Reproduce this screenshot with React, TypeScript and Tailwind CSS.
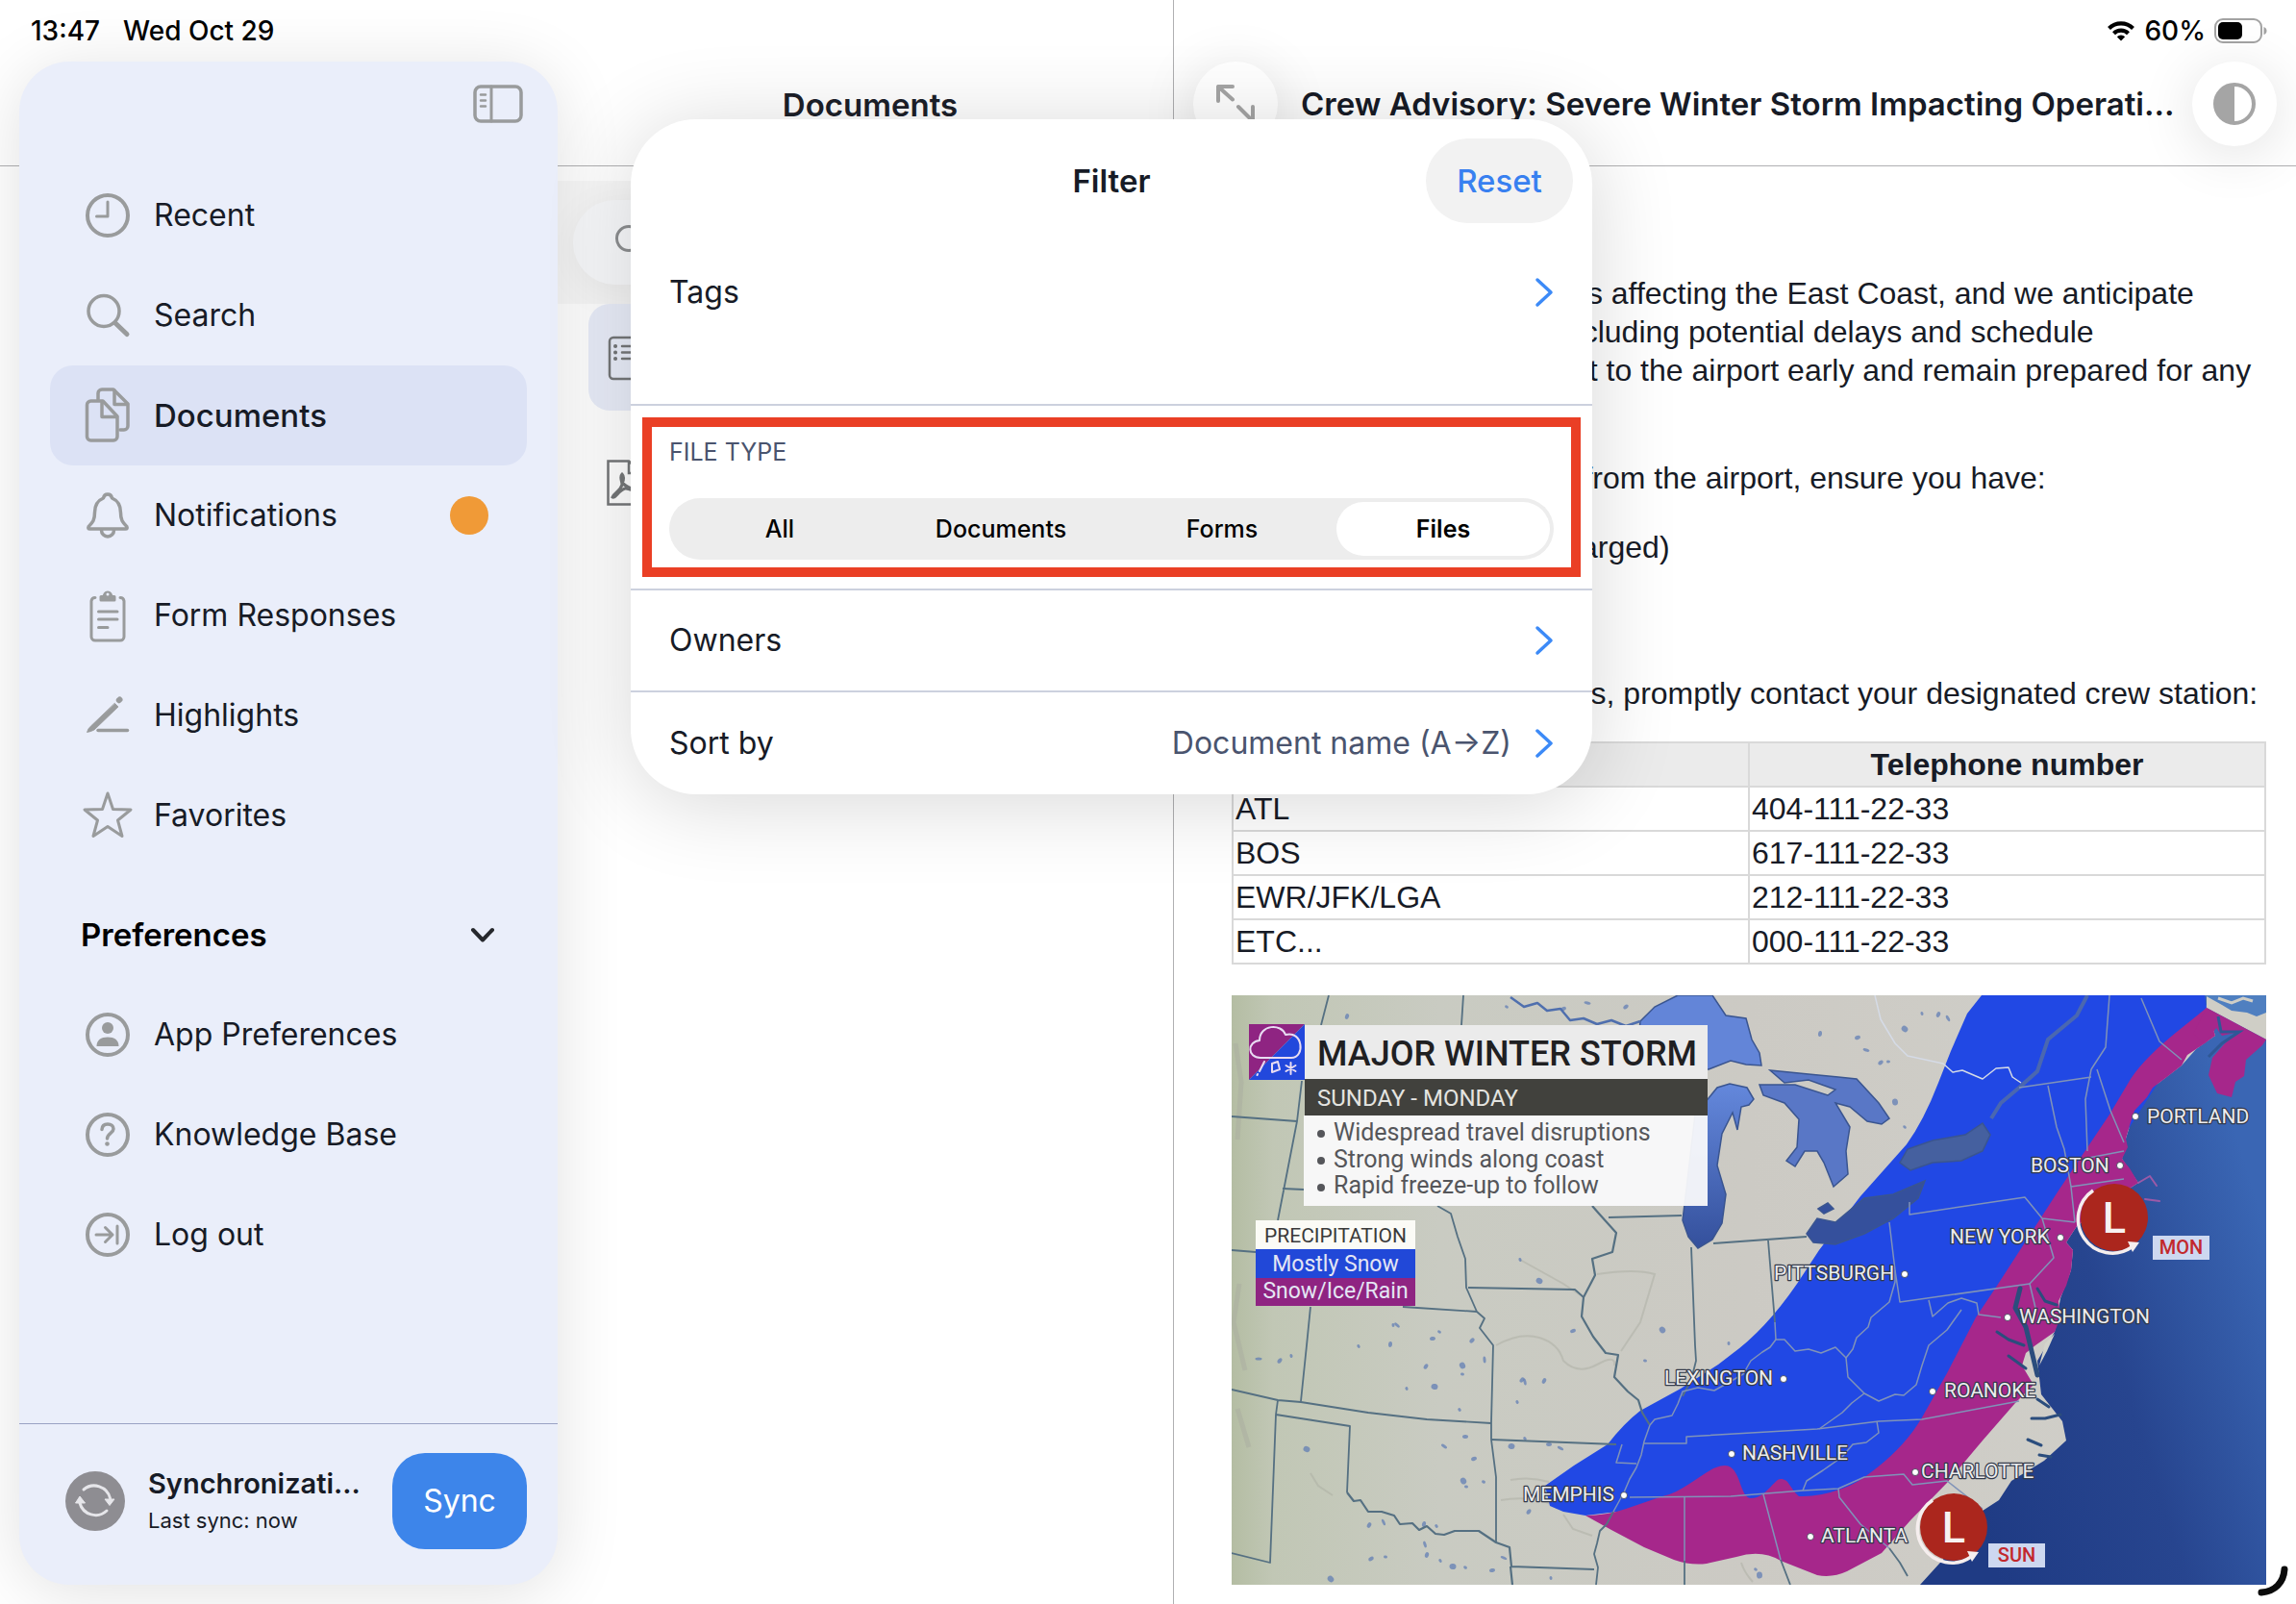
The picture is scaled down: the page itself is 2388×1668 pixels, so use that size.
import React, { useState } from 'react';

type IconProps = { children: React.ReactNode };

// Shared frame for the sidebar icons, the drawing itself sits on a 48x48 field
function NavIcon({ children }: IconProps) {
  return (
    <svg
      className="h-15 w-12 shrink-0 overflow-visible text-[#999b9c]"
      viewBox="0 -6 48 60"
      fill="none"
      stroke="currentColor"
      strokeWidth="4"
      strokeLinecap="round"
      strokeLinejoin="round"
      aria-hidden="true"
    >
      {children}
    </svg>
  );
}

const mainItems = [
  {
    label: 'Recent',
    icon: (
      <>
        <circle cx="24" cy="24" r="21" />
        <path d="M24 10V25H12.500" strokeWidth="3" />
      </>
    ),
  },
  {
    label: 'Search',
    icon: (
      <>
        <circle cx="20" cy="19.500" r="16" strokeWidth="3.500" />
        <path d="M32 32L44 43.500" strokeWidth="5" />
      </>
    ),
  },
  {
    label: 'Documents',
    icon: (
      <g strokeWidth="3.500">
        <path d="M6.500 9H19L34 25V46a4 4 0 0 1-4 4H6.500a4 4 0 0 1-4-4V13a4 4 0 0 1 4-4Z" />
        <path d="M18 9.500V25.500H33.500" />
        <path d="M14 7.500V1a4 4 0 0 1 4-4H30L45 12V35a4 4 0 0 1-4 4H37" />
        <path d="M31 -2V12.500H44.500" />
      </g>
    ),
  },
  {
    label: 'Notifications',
    badge: true,
    icon: (
      <g strokeWidth="3.500">
        <path d="M24 2C21.500 2 20 3.500 19.500 6C13.500 8.500 10.500 14 10.500 21C10.500 29 8.500 31 4.200 35.500Q3 38 5.500 38H42.500Q45 38 43.800 35.500C39.500 31 37.500 29 37.500 21C37.500 14 34.500 8.500 28.500 6C28 3.500 26.500 2 24 2Z" />
        <path d="M17.500 39.500a6.500 6.500 0 0 0 13 0" />
      </g>
    ),
  },
  {
    label: 'Form Responses',
    icon: (
      <g strokeWidth="3">
        <path d="M11 5.500a4 4 0 0 0-4 3.500V46a4 4 0 0 0 4 4H37a4 4 0 0 0 4-4V9a4 4 0 0 0-4-3.500" />
        <path d="M17 8V4.500h3.500a3.600 3.600 0 1 1 7 0H31V8Z" fill="currentColor" />
        <circle cx="24" cy="2" r="1.500" fill="#eaeefa" stroke="none" />
        <path d="M14.500 20H34M14.500 28H34M14.500 36.500H24" />
      </g>
    ),
  },
  {
    label: 'Highlights',
    icon: (
      <g>
        <path d="M31.500 11.500L35 15L10 39Q6 41 2.500 41.500Q3.500 37.500 6 35.500Z" fill="currentColor" strokeWidth="0.800" />
        <path d="M35.800 8.200L36.500 7.500" strokeWidth="6" />
        <path d="M14 39.500H44.500" strokeWidth="3.500" />
      </g>
    ),
  },
  {
    label: 'Favorites',
    icon: (
      <path
        d="M24 1L29.500 17.500L48 18L34.500 29L39 45.500L24 35.500L9 45.500L13.500 29L0 18L18.500 17.500Z"
        strokeWidth="3"
      />
    ),
  },
];

const preferenceItems = [
  {
    label: 'App Preferences',
    icon: (
      <>
        <circle cx="24" cy="24" r="21" />
        <circle cx="24" cy="17" r="6" fill="currentColor" stroke="none" />
        <path d="M12.500 36C12.500 29.500 17 26.500 24 26.500S35.500 29.500 35.500 36Z" fill="currentColor" stroke="none" />
      </>
    ),
  },
  {
    label: 'Knowledge Base',
    icon: (
      <>
        <circle cx="24" cy="24" r="21" />
        <path d="M18 18.500C18.200 14.800 20.600 13 24 13C27.600 13 30 15 30 18C30 22.300 23.500 22.500 23.500 28" strokeWidth="3.500" />
        <circle cx="23.500" cy="33.500" r="2.300" fill="currentColor" stroke="none" />
      </>
    ),
  },
  {
    label: 'Log out',
    icon: (
      <>
        <circle cx="24" cy="24" r="21" />
        <path d="M12 24H29M21.500 16.500L29 24L21.500 31.500M34 15V33" strokeWidth="3" />
      </>
    ),
  },
];

function Sidebar() {
  const [active, setActive] = useState('Documents');

  const renderItem = (item: { label: string; icon: React.ReactNode; badge?: boolean }) => (
    <li key={item.label}>
      <button
        onClick={() => setActive(item.label)}
        className={`flex h-[104px] w-full items-center gap-6 rounded-[24px] pl-9 pr-10 text-left text-[#171b26] ${
          active === item.label ? 'bg-[#dce2f5] text-[33px] font-medium' : ''
        }`}
      >
        <NavIcon>{item.icon}</NavIcon>
        <span className="flex-1">{item.label}</span>
        {item.badge && <span className="h-10 w-10 rounded-full bg-[#f09a37]" />}
      </button>
    </li>
  );

  return (
    <aside className="z-10 col-start-1 row-span-2 row-start-1 mb-5 ml-5 mt-16 flex flex-col rounded-[52px] bg-[#eaeefa] shadow-[0_8px_70px_rgba(0,0,0,0.12)]">
      <div className="flex h-[108px] items-start justify-end pr-9 pt-6">
        <button aria-label="Toggle sidebar">
          <svg className="h-10 w-[52px]" viewBox="0 0 52 40" fill="none" stroke="#999b9c" strokeWidth="3.500" strokeLinecap="round">
            <rect x="2" y="2" width="48" height="36" rx="6" />
            <path d="M19 2V38" strokeWidth="3" />
            <path d="M8 10.500H13M8 16.500H13M8 22.500H13" strokeWidth="2.500" />
          </svg>
        </button>
      </div>
      <nav className="flex-1 px-8">
        <ul>{mainItems.map(renderItem)}</ul>
        <button className="mt-5 flex h-[104px] w-full items-center justify-between px-8 text-[33px] font-semibold text-black">
          Preferences
          <svg className="h-7 w-7" viewBox="0 0 28 28" fill="none" stroke="#26282d" strokeWidth="4" strokeLinecap="round" strokeLinejoin="round">
            <path d="M4 9L14 19.500L24 9" />
          </svg>
        </button>
        <ul>{preferenceItems.map(renderItem)}</ul>
      </nav>
      <div className="flex h-[168px] items-center border-t border-[#9aa2c4] pb-2 pl-12 pr-8">
        <svg className="h-[62px] w-[62px] shrink-0" viewBox="0 0 62 62" aria-hidden="true">
          <circle cx="31" cy="31" r="31" fill="#8e8d92" />
          <g fill="none" stroke="#e6e6ea" strokeWidth="3" strokeLinecap="round">
            <path d="M19 19A17 17 0 0 1 46.500 28" />
            <path d="M43 41A17 17 0 0 1 15 33" />
          </g>
          <path d="M41 29H51L46 35.500ZM10.500 33H20.500L15 26Z" fill="#e6e6ea" stroke="#e6e6ea" strokeLinejoin="round" />
        </svg>
        <div className="ml-6 flex-1 whitespace-nowrap text-[#171b26]">
          <p className="text-[29px] font-semibold leading-10">Synchronizati...</p>
          <p className="text-[22px] leading-9">Last sync: now</p>
        </div>
        <button className="h-[100px] w-[140px] shrink-0 rounded-[34px] bg-[#3d85ea] text-white">Sync</button>
      </div>
    </aside>
  );
}

function ListHeader() {
  return (
    <header className="col-span-2 col-start-1 row-start-1 border-b border-[#b0b0b2]">
      <div className="flex h-16 items-center gap-6 pl-8 text-[28px] font-medium text-black">
        <span>13:47</span>
        <span>Wed Oct 29</span>
      </div>
      <h1 className="flex h-[90px] items-center justify-center pl-[590px] text-[33px] font-semibold text-[#1c2029]">Documents</h1>
    </header>
  );
}

function DocumentList() {
  return (
    <section className="col-start-2 row-start-2 pt-[15px]">
      <div className="bg-[#f8f8f8] px-4 py-5">
        <label className="flex h-[88px] items-center gap-4 rounded-full bg-[#f8f9fb] pl-11 shadow-[0_8px_40px_rgba(0,0,0,0.05)]">
          <svg className="h-9 w-9" viewBox="0 0 36 36" fill="none" stroke="#8d8f91" strokeWidth="3" strokeLinecap="round">
            <circle cx="14" cy="14" r="12.500" />
            <path d="M23 23L32 32" />
          </svg>
          <input type="search" aria-label="Search documents" className="flex-1 bg-transparent outline-none" />
        </label>
      </div>
      <ul className="pl-8 pr-4 text-[#757779]">
        <li className="flex h-[111px] items-center rounded-[22px] bg-[#e9edf9] pl-5">
          <svg className="h-12 w-12" viewBox="0 0 48 48" fill="none" stroke="currentColor" strokeWidth="2.500" strokeLinecap="round">
            <rect x="2" y="3" width="44" height="43" rx="4" />
            <path d="M15 12H38M15 18.500H38M15 25H38" />
            <path d="M8 12H8.100M8 18.500H8.100M8 25H8.100" strokeWidth="4" />
          </svg>
        </li>
        <li className="flex h-[150px] items-center pl-[18px]">
          <svg className="h-12 w-10" viewBox="0 0 40 48" fill="none" stroke="currentColor" strokeWidth="2.500">
            <path d="M2.500 1.500H24L38 14V46.500H2.500Z M24 1.500V14H38" />
            <path d="M17 15C14 18 17 22 17 26C15 33 9 34 7 39C10 41 13 32 20 30C24 29 30 34 33 33C30 30 22 30 17.500 24C19 20 19 17 17 15Z" strokeWidth="3" />
          </svg>
        </li>
      </ul>
    </section>
  );
}

function DetailHeader() {
  return (
    <header className="col-start-3 row-start-1 border-b border-l border-[#b0b0b2]">
      <div className="flex h-16 items-center justify-end gap-2 pr-7 text-[28px] font-medium text-black">
        <svg className="h-6 w-8" viewBox="0 0 32 24" fill="none" stroke="#000" strokeWidth="4.200">
          <path d="M3.500 9.500A18 18 0 0 1 28.500 9.500" />
          <path d="M8.500 14.700A10.800 10.800 0 0 1 23.500 14.700" />
          <path d="M16 22.500L11.800 18.200A6 6 0 0 1 20.200 18.200Z" fill="#000" stroke="none" />
        </svg>
        <span>60%</span>
        <svg className="h-7 w-[58px]" viewBox="0 0 58 28" aria-label="Battery">
          <rect x="2" y="2" width="48" height="24" rx="8" fill="none" stroke="#a3a3a3" strokeWidth="2" />
          <rect x="5" y="5" width="25" height="18" rx="5" fill="#000" />
          <path d="M52.500 10Q55.500 11 55.500 14T52.500 18Z" fill="#a3a3a3" />
        </svg>
      </div>
      <div className="flex h-[88px] items-center px-5">
        <button aria-label="Expand" className="flex h-[88px] w-[88px] shrink-0 items-center justify-center rounded-full bg-white shadow-[0_8px_60px_rgba(0,0,0,0.12)]">
          <svg className="h-11 w-11" viewBox="0 0 44 44" fill="none" stroke="#a5a5a5" strokeWidth="4" strokeLinecap="round" strokeLinejoin="round">
            <path d="M4 19V4H19M4 4L19 17.500M25 25L40 40M40 25V40H25" />
          </svg>
        </button>
        <h2 className="min-w-0 flex-1 overflow-hidden whitespace-nowrap pl-6 text-[33px] font-semibold leading-[48px] text-[#171b26]">
          Crew Advisory: Severe Winter Storm Impacting Operati...
        </h2>
        <button aria-label="Contrast" className="flex h-[88px] w-[88px] shrink-0 items-center justify-center rounded-full bg-white shadow-[0_8px_60px_rgba(0,0,0,0.12)]">
          <svg className="h-11 w-11" viewBox="0 0 44 44">
            <circle cx="22" cy="22" r="20" fill="none" stroke="#a5a5a5" strokeWidth="4" />
            <path d="M22 2A20 20 0 0 0 22 42Z" fill="#a5a5a5" />
          </svg>
        </button>
      </div>
    </header>
  );
}

const phones = [
  ['ATL', '404-111-22-33'],
  ['BOS', '617-111-22-33'],
  ['EWR/JFK/LGA', '212-111-22-33'],
  ['ETC...', '000-111-22-33'],
];

// x/y is the label's left baseline, dx/dy the dot
const cities = [
  { name: 'PORTLAND', x: 952, y: 133, dx: 940, dy: 126 },
  { name: 'BOSTON', x: 831, y: 184, dx: 924, dy: 177 },
  { name: 'NEW YORK', x: 747, y: 258, dx: 862, dy: 252 },
  { name: 'PITTSBURGH', x: 564, y: 296, dx: 700, dy: 290 },
  { name: 'WASHINGTON', x: 819, y: 341, dx: 807, dy: 335 },
  { name: 'ROANOKE', x: 741, y: 418, dx: 729, dy: 412 },
  { name: 'LEXINGTON', x: 450, y: 405, dx: 574, dy: 399 },
  { name: 'NASHVILLE', x: 531, y: 483, dx: 520, dy: 477 },
  { name: 'CHARLOTTE', x: 717, y: 502, dx: 711, dy: 496 },
  { name: 'MEMPHIS', x: 303, y: 526, dx: 408, dy: 520 },
  { name: 'ATLANTA', x: 613, y: 569, dx: 602, dy: 563 },
];

// small reservoirs scattered over the plains
const ponds = [
  [28, 378], [50, 380], [62, 375], [78, 472], [132, 365], [165, 363], [172, 343], [209, 357], [216, 350], [240, 385], [240, 394],
  [250, 359], [263, 379], [202, 386], [182, 409], [211, 407], [237, 431], [243, 459], [221, 469], [252, 482], [262, 506],
  [241, 505], [244, 511], [302, 400], [305, 402], [325, 401], [297, 423], [291, 469], [305, 461], [330, 467], [342, 471],
  [355, 349], [430, 380], [448, 348], [517, 362], [309, 537], [201, 571], [203, 582], [217, 588], [230, 594], [243, 595],
  [271, 598], [283, 585], [145, 586], [160, 584], [103, 607], [332, 606], [143, 551], [158, 548], [200, 550], [213, 552],
  [549, 603], [545, 597], [651, 44], [660, 57], [675, 70], [683, 69], [700, 35], [718, 19], [735, 20], [745, 24], [612, 40],
  [700, 137], [690, 111], [286, 12], [345, 14], [370, 8], [410, 12], [168, 343], [320, 297], [300, 275], [120, 22],
];

function StormMap() {
  return (
    <svg className="mt-8 block w-full" viewBox="0 0 1076 613" fontFamily="Roboto, sans-serif" role="img" aria-label="Winter storm map">
      <defs>
        <linearGradient id="land" x1="0" x2="1" y1="0" y2="0">
          <stop offset="0" stopColor="#b4bda3" />
          <stop offset="0.040" stopColor="#c1c7b5" />
          <stop offset="0.200" stopColor="#c9cbc2" />
          <stop offset="0.500" stopColor="#cccac4" />
          <stop offset="1" stopColor="#d1d0ca" />
        </linearGradient>
        <linearGradient id="ocean" x1="0.150" x2="1" y1="0.850" y2="0.400">
          <stop offset="0" stopColor="#1f3b84" />
          <stop offset="0.500" stopColor="#27458f" />
          <stop offset="1" stopColor="#3a66b4" />
        </linearGradient>
        <linearGradient id="lake" x1="0" x2="0" y1="0" y2="1">
          <stop offset="0" stopColor="#6488dc" />
          <stop offset="1" stopColor="#34509c" />
        </linearGradient>
        <clipPath id="frame">
          <rect width="1076" height="613" />
        </clipPath>
      </defs>
      <g clipPath="url(#frame)">
        <rect width="1076" height="613" fill="url(#land)" />
        {/* faint terrain */}
        <g fill="none" stroke="#a9aa9f" strokeWidth="2" opacity="0.450">
          <path d="M275 364Q300 350 320 356T345 380Q360 395 380 384T398 385M380 290Q420 284 440 290L425 340L405 370M300 275L345 300L366 314" />
          <path d="M82 497L90 510L105 520M290 504Q310 500 330 506M280 525Q310 520 335 530M345 540L355 555L375 562M530 590Q533 600 542 610" />
          <path d="M4 50L10 90L6 150M8 300L2 340L14 390M6 430L18 470" strokeWidth="5" />
        </g>
        <g fill="#5b79b4">
          {ponds.map(([x, y], i) => (
            <ellipse key={i} cx={x} cy={y} rx={i % 3 === 0 ? 3.5 : 2} ry={i % 2 === 0 ? 1.5 : 3} transform={`rotate(${(i * 37) % 90} ${x} ${y})`} opacity="0.7" />
          ))}
        </g>

        <path
          d="M1014 13L1023 42L1003 56L988 73L958 96L939 120L930 149L926 170L943 195L912 215L879 240L868 257L875 265L873 286L862 315L856 350L838 380L842 415L864 443L868 463L845 484L811 505L798 525L781 536L763 562L736 591L716 613H1076V0H1010Z"
          fill="url(#ocean)"
        />
        <path d="M1014 0H1076V46L1014 13Z" fill="#cfcec6" />
        <path d="M1012 0H1076V18L1066 22L1056 18L1040 16L1030 10Z" fill="#4f7fc0" />
        <path d="M1026 3L1040 8L1052 3L1062 6" fill="none" stroke="#cfcec6" strokeWidth="3" />

        {/* snow */}
        <path
          d="M780 0L765 19L748 58L735 91Q720 130 702 155L654 209L611 265L588 300Q555 348 519 374L506 384L467 409L425 432Q408 445 391 467L356 489L326 510L331 531L345 537L368 541L410 536L600 530L700 500L1014 13L1012 0Z"
          fill="#2148e4"
        />
        {/* mix */}
        <path
          d="M1014 13L988 34Q950 64 935 87L913 124L860 203L796 302L774 335L744 393L718 439Q700 470 665 496Q650 508 635 513Q610 522 590 521C580 512 580 503 571 503C564 503 556 523 540 523C528 523 530 489 513 489C495 489 475 515 448 521L410 534Q390 541 368 541L395 556L429 574L460 587Q477 593 494 591L525 584Q551 576 571 588L609 603Q625 606 640 599L676 580L706 546L744 507L781 463L815 424L834 405L822 385L826 372L836 364L856 350L862 335L860 318L868 302L873 286L875 265L868 257L879 240L912 215L943 195L934 180L926 170L932 158L930 149L935 132L939 120L952 106L958 96L974 84L988 73L994 62L1003 56L1012 50L1023 42Z"
          fill="#a6278b"
        />
        <path d="M1014 13L1076 46L1072 52L1055 67L1053 84L1044 90L1040 106L1025 102L1016 83L1020 65L1033 50L1048 38L1030 42L1024 34L1012 50L1000 40Z" fill="#a6278b" />
        <path d="M1026 22L1029 38L1048 38L1030 50L1016 64" fill="none" stroke="#2f5796" strokeWidth="3" />

        {/* lakes */}
        <g stroke="#3a5590" strokeWidth="1.500">
          <path fill="#6385d8" d="M425 27L440 12L464 0H500L514 21L535 24L541 46L549 60L551 73L535 72L519 68L496 77H420Z" />
          <path
            fill="url(#lake)"
            d="M482 124L496 107L505 96L518 92L536 96L543 108L538 114L530 116L526 140L521 122L510 144L505 177L514 207L510 237L500 254L485 263L475 251L469 234L473 201Z"
          />
          <path fill="#5977c6" d="M549 93H586L620 104L628 98L600 88L575 91L560 78L600 82L631 85L650 87L673 112L684 128L676 134L661 131L643 116L628 112L643 137L639 162L641 186L626 199L616 174L609 162L596 162L586 178L577 172L588 158L590 129L575 112L553 104Z" />
          <path d="M598 248L609 232L628 236L658 211L688 207L721 193L714 211L688 232L658 248L628 259L605 257Z" fill="#35509c" />
          <path d="M610 222L620 216L626 222L616 227Z" fill="#35509c" />
          <path d="M695 174L703 160L729 151L763 145L781 133L789 145L781 162L759 172L729 174L706 182Z" fill="#45609f" />
        </g>
        <path d="M790 128L800 112L819 96L838 79L849 46L879 21L890 0" fill="none" stroke="#4a67b0" strokeWidth="4" />

        {/* state lines over open land */}
        <g fill="none" stroke="#557082" strokeWidth="1.800" strokeLinejoin="round">
          <path d="M101 0L93 31M241 0L239 31M0 126L68 131M73 89L68 131L48 234M53 201L75 202M0 265L25 267" />
          <path d="M214 219L228 227L235 251L243 274L244 304L255 329L263 336L258 346L272 364L270 444V462L275 501V569" />
          <path d="M246 304L357 306L366 314M178 324L255 329M82 324L78 364L72 422" />
          <path d="M375 219L382 227L400 247L396 267L375 274L378 291L366 314L364 334L376 355L389 372L402 374L398 397L412 412L423 421L427 434L435 447" strokeWidth="2.200" />
          <path d="M392 231L468 229M478 262L482 364L483 380L478 400L469 417M501 258L598 251M558 255L565 340" />
          <path d="M0 410L48 421L72 423L142 434L203 441L270 445M48 421L46 436L40 590L0 580M46 436L123 448L120 517" />
          <path d="M120 517L127 526L134 525L142 537L156 537L169 541L175 550L188 549L195 556L203 552L212 560L221 561L232 557L257 557L266 563L275 569L289 574L291 594L377 597M290 594L292 613" strokeWidth="2.200" />
          <path d="M270 462L400 467M397 537L390 550L383 557L380 570L377 581L381 595L379 613M471 588V613M571 587L581 613M684 575L695 590L703 604" />
          <path d="M290 2L304 12L318 8L328 16L342 14L352 26L366 24L380 30L395 26L410 32L425 27" stroke="#4f6fae" strokeWidth="2.500" />
        </g>
        {/* and over the precipitation bands */}
        <g fill="none" stroke="#8093b8" strokeWidth="1.500" strokeLinejoin="round">
          <path d="M435 447L429 464L426 478L421 491L414 503L408 517L397 537M406 467L400 486L421 487" />
          <path d="M429 466H473V459L609 451L673 443L718 441L819 422M414 522L519 521L594 515L631 513L658 501L699 498L708 509L744 505L781 534" />
          <path d="M471 522V588M553 519L571 587M631 513L632 522L654 550L684 575M594 515L598 505L615 494L635 480L646 467L660 465L673 455L671 443" />
          <path d="M435 447L440 441L458 437L464 425L469 412L485 408L502 411L518 402L532 394L540 380L552 371L560 366L566 358L575 358L586 370L600 368L613 372L628 366L639 377L646 368L650 356L662 345L665 335L684 319L690 298V286L684 236" />
          <path d="M565 340L566 358M690 286L695 319L830 300M639 377L641 397L658 414L673 422L690 415L699 416L712 405L718 385L725 364L744 348L759 327M658 414L645 424L635 434L611 451" />
          <path d="M725 317L729 334L745 320L759 315L775 320L777 332L800 335M705 215V228L825 210L843 232L877 236M843 232L855 273L830 300L836 325" />
          <path d="M849 94L858 137L866 160L873 199L877 236M894 77L888 108L890 162M900 77L914 120L928 153M873 199L928 191M886 170L928 162M913 0L909 54L894 77M946 3L965 48L988 67M819 96L894 85" />
          <path d="M669 0L675 25L690 50L703 63L740 71L750 80L760 78L781 87L795 76L808 75L812 85L821 91" stroke="#d5dbe6" />
        </g>

        {/* Chesapeake and the sounds */}
        <g fill="none" stroke="#2b4d7d" strokeLinecap="round" strokeLinejoin="round">
          <path d="M820 305L815 325L826 345L832 370L838 395" strokeWidth="5" />
          <path d="M838 305L846 318L858 322M796 350L808 358L824 364M808 375L826 388" strokeWidth="3" />
          <path d="M832 440L846 440L862 436M828 462L842 468M840 478L852 480M838 420L850 428" strokeWidth="3" />
          <path d="M943 195L955 188L962 198M950 212L965 214" stroke="#9c5aa8" strokeWidth="2" />
        </g>
        <path d="M856 352L846 362L840 385L848 370Z" fill="#d4d4cc" />

        {/* low pressure centers */}
        {[
          { cx: 918, cy: 231, bx: 958, by: 250, day: 'MON' },
          { cx: 751, cy: 553, bx: 787, by: 570, day: 'SUN' },
        ].map((low) => (
          <g key={low.day}>
            <circle cx={low.cx} cy={low.cy} r="35" fill="#ab261d" />
            <path
              d={`M${low.cx - 22} ${low.cy - 28}A35.500 35.500 0 0 0 ${low.cx + 18} ${low.cy + 31}`}
              fill="none"
              stroke="#f5eeee"
              strokeWidth="3.500"
            />
            <path d={`M${low.cx + 14} ${low.cy + 25}L${low.cx + 26} ${low.cy + 26}L${low.cx + 19} ${low.cy + 36}Z`} fill="#f5eeee" />
            <text x={low.cx} y={low.cy + 16} textAnchor="middle" fontSize="45" fontWeight="500" fill="#f7f2f2">
              L
            </text>
            <rect x={low.bx} y={low.by} width="59" height="25" fill="#cdd8f0" />
            <text x={low.bx + 29.5} y={low.by + 19} textAnchor="middle" fontSize="20" fontWeight="500" fill="#c2282d">
              {low.day}
            </text>
          </g>
        ))}

        {cities.map((city) => (
          <g key={city.name}>
            <text
              x={city.x}
              y={city.y}
              fontSize="21"
              fill="#ececee"
              stroke="#333a4a"
              strokeWidth="2.5"
              strokeLinejoin="round"
              paintOrder="stroke"
            >
              {city.name}
            </text>
            <circle cx={city.dx} cy={city.dy} r="3.500" fill="#fff" stroke="#333a4a" strokeWidth="0.800" />
          </g>
        ))}

        {/* headline card */}
        <rect x="76" y="31" width="419" height="56" fill="#ebebeb" />
        <rect x="76" y="87" width="419" height="38" fill="#41413d" />
        <rect x="75" y="125" width="420" height="94" fill="#fafafb" fillOpacity="0.940" />
        <path d="M18 88V30H76Z" fill="#8f2482" />
        <path d="M76 30V88H18Z" fill="#2248dc" />
        <g fill="none" stroke="#e8dcf2" strokeWidth="2" strokeLinecap="round" strokeLinejoin="round">
          <path d="M30 65C16 65 16 48 29 47C29 30 52 29 56 41C74 36 77 65 62 65Z" />
          <path d="M34 69L29 79M27 82L26.500 83M42 71L48 69L50 77L42 80Z" />
          <path d="M61.500 70V82M56.500 73L66.500 79M66.500 73L56.500 79" />
        </g>
        <text x="89" y="73" fontSize="36" fontWeight="500" fill="#1f2022">
          MAJOR WINTER STORM
        </text>
        <text x="89" y="115" fontSize="24" fill="#e4e4e0">
          SUNDAY - MONDAY
        </text>
        <g fontSize="25" fill="#55565a">
          <text x="106" y="151">Widespread travel disruptions</text>
          <text x="106" y="179">Strong winds along coast</text>
          <text x="106" y="206">Rapid freeze-up to follow</text>
          <circle cx="93" cy="144" r="4" />
          <circle cx="93" cy="172" r="4" />
          <circle cx="93" cy="200" r="4" />
        </g>

        {/* legend */}
        <rect x="25" y="234" width="166" height="30" fill="#fbfbf6" />
        <rect x="25" y="264" width="166" height="30" fill="#2148d8" />
        <rect x="25" y="294" width="166" height="29" fill="#8f2482" />
        <g textAnchor="middle" fontSize="23" fill="#e4e6f4">
          <text x="108" y="257" fontSize="21" fill="#3a3a3a">
            PRECIPITATION
          </text>
          <text x="108" y="287">Mostly Snow</text>
          <text x="108" y="315">Snow/Ice/Rain</text>
        </g>
      </g>
    </svg>
  );
}

function DocumentView() {
  return (
    <article className="col-start-3 row-start-2 border-l border-[#b0b0b2] pl-[60px] pr-[31px] pt-10 font-['Liberation_Sans',sans-serif] leading-10 text-[#171b26]">
      <p className="mb-8">Dear Crew Members,</p>
      <p className="mb-8 whitespace-nowrap">
        A significant winter storm is affecting the East Coast, and we anticipate
        <br />
        operational disruptions, including potential delays and schedule
        <br />
        adjustments. Please report to the airport early and remain prepared for any
        <br />
        changes.
      </p>
      <p className="mb-8 whitespace-nowrap">Before commuting to and from the airport, ensure you have:</p>
      <ul className="mb-8 list-disc pl-[34px]">
        <li>Company iPad (fully charged)</li>
        <li>Crew ID badge</li>
        <li>Warm clothing</li>
      </ul>
      <p className="mb-[30px] whitespace-nowrap">If you encounter any issues, promptly contact your designated crew station:</p>
      <table className="w-full table-fixed border-collapse">
        <thead>
          <tr className="bg-[#ebebeb]">
            <th aria-label="Crew station" className="border-2 border-[#d9d9d9] px-[2px] py-[2px]" />
            <th className="border-2 border-[#d9d9d9] px-[2px] py-[2px] font-bold">Telephone number</th>
          </tr>
        </thead>
        <tbody>
          {phones.map(([station, phone]) => (
            <tr key={station}>
              <td className="border-2 border-[#d9d9d9] px-[2px] py-[2px]">{station}</td>
              <td className="border-2 border-[#d9d9d9] px-[2px] py-[2px]">{phone}</td>
            </tr>
          ))}
        </tbody>
      </table>
      <StormMap />
    </article>
  );
}

function Chevron() {
  return (
    <svg className="h-8 w-5 shrink-0" viewBox="0 0 20 32" fill="none" stroke="#3c8af7" strokeWidth="3.500" strokeLinecap="round" strokeLinejoin="round">
      <path d="M3 3L17 16L3 29" />
    </svg>
  );
}

const fileTypes = ['All', 'Documents', 'Forms', 'Files'];

function FilterPopover() {
  const [fileType, setFileType] = useState('Files');

  return (
    <div
      role="dialog"
      aria-label="Filter"
      className="absolute left-[656px] top-[124px] z-20 w-[1000px] rounded-[68px] bg-white text-[#171b26] shadow-[0_8px_90px_rgba(0,0,0,0.16)]"
    >
      <div className="grid grid-cols-3 items-center p-5">
        <h3 className="col-start-2 text-center text-[33px] font-semibold">Filter</h3>
        <button className="h-[88px] w-[153px] justify-self-end rounded-full bg-[#f2f2f2] text-[33px] font-medium text-[#3880f0]">Reset</button>
      </div>
      <div className="border-b-2 border-[#ccd1de] pb-16">
        <button className="flex h-[104px] w-full items-center justify-between px-10">
          Tags
          <Chevron />
        </button>
      </div>
      <div className="m-3 border-[10px] border-[#ea3f25] px-[18px] pb-2 pt-[10px]">
        <p className="text-[25px] leading-8 text-[#4a546e]">FILE TYPE</p>
        <div className="mt-8 grid h-16 grid-cols-4 rounded-full bg-[#ededed] text-[25px] font-medium text-black">
          {fileTypes.map((type) => (
            <button
              key={type}
              aria-pressed={fileType === type}
              onClick={() => setFileType(type)}
              className={`m-1 rounded-full ${fileType === type ? 'bg-white font-semibold' : ''}`}
            >
              {type}
            </button>
          ))}
        </div>
      </div>
      <button className="flex h-[108px] w-full items-center justify-between border-y-2 border-[#ccd1de] px-10">
        Owners
        <Chevron />
      </button>
      <button className="flex h-[106px] w-full items-center gap-6 px-10">
        <span className="flex-1 text-left">Sort by</span>
        <span className="text-[#4a546e]">Document name (A→Z)</span>
        <Chevron />
      </button>
    </div>
  );
}

export default function App() {
  return (
    <main className="relative grid min-h-screen grid-cols-[580px_640px_1fr] grid-rows-[173px_1fr] overflow-hidden bg-white font-['Inter',sans-serif] text-[32px] leading-10">
      <ListHeader />
      <Sidebar />
      <DocumentList />
      <DetailHeader />
      <DocumentView />
      <FilterPopover />
      {/* resize handle in the window corner */}
      <svg className="absolute bottom-2 right-2 h-8 w-8" viewBox="0 0 32 32" fill="none" stroke="#0b0b0b" strokeWidth="7" strokeLinecap="round">
        <path d="M28 4C27 18 18 27 4 28" />
      </svg>
    </main>
  );
}
